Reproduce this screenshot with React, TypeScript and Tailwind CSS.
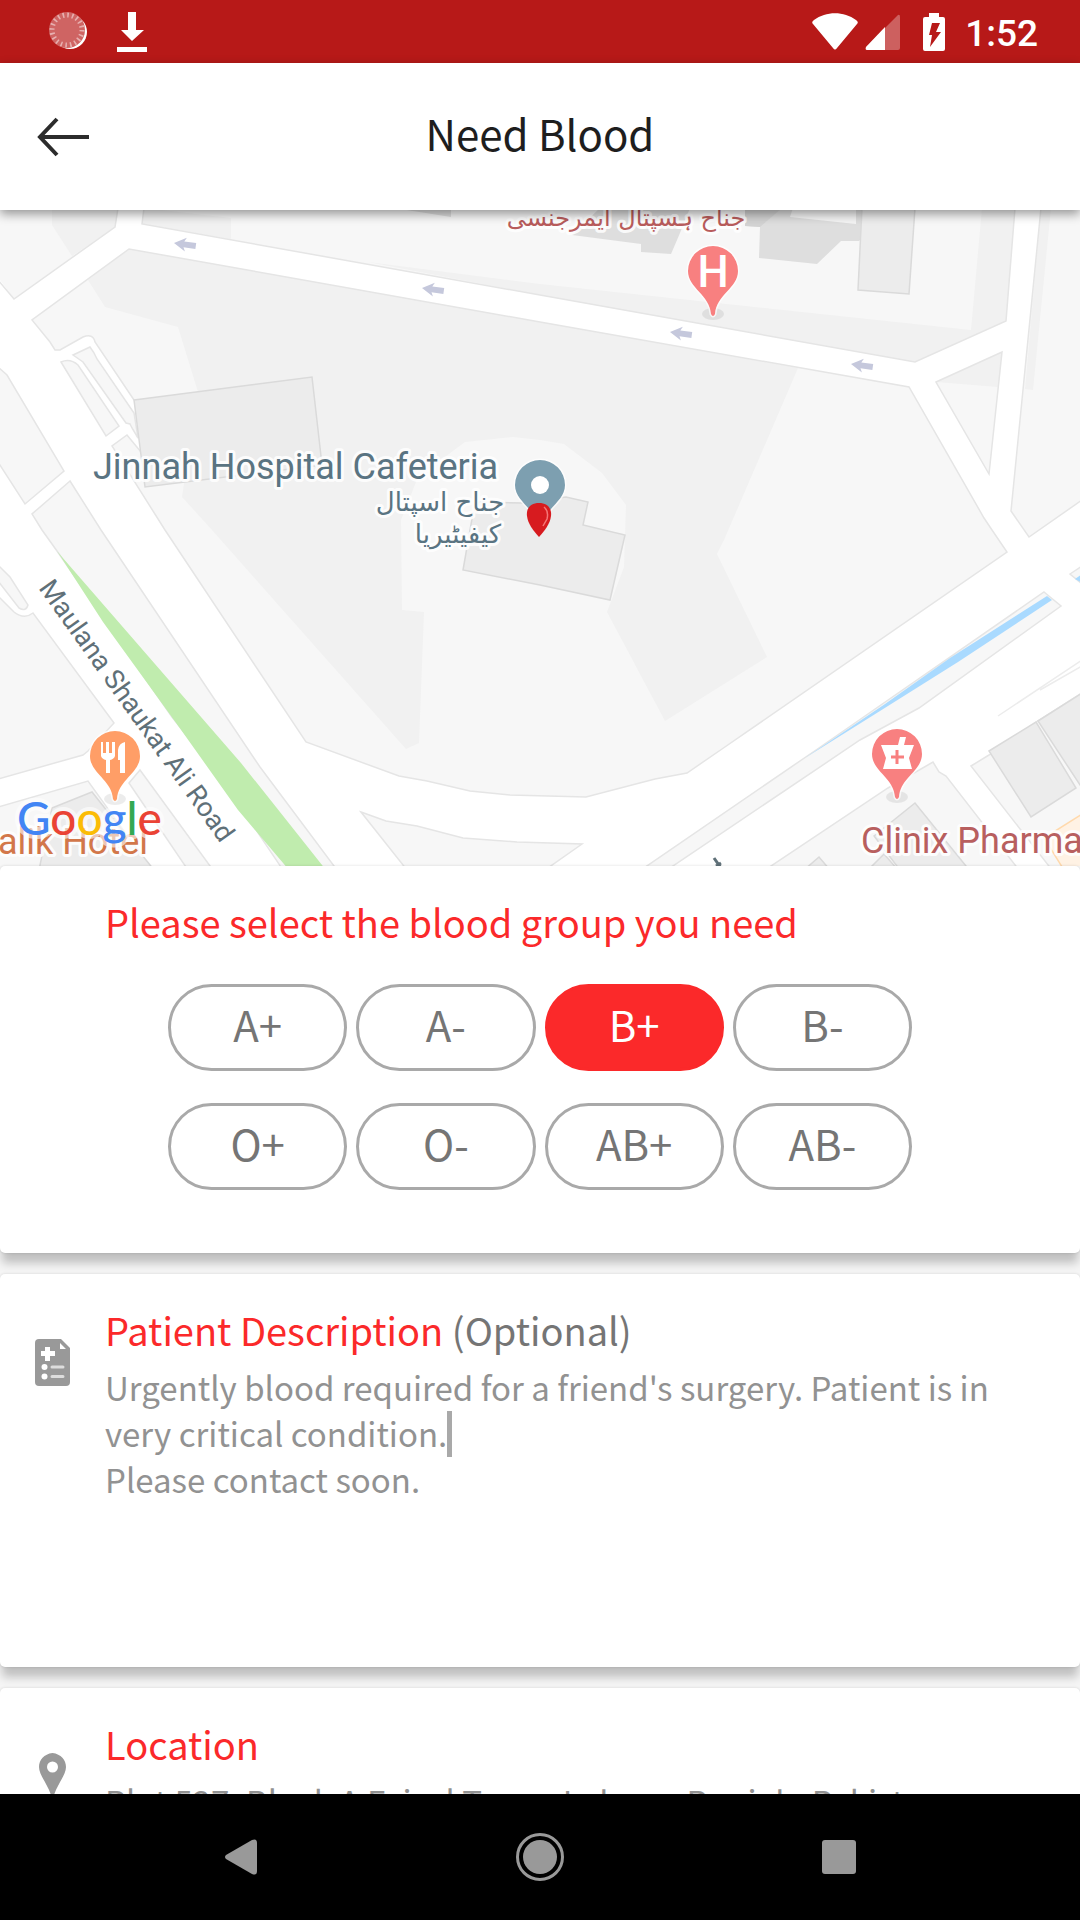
import { useState } from "react";

const bloodGroups = ["A+", "A-", "B+", "B-", "O+", "O-", "AB+", "AB-"];

function StatusBar() {
  return (
    <div className="flex h-[63px] shrink-0 items-center justify-between bg-[#b71918] pr-[42px] pl-[48px] text-white">
      <div className="flex items-center gap-[29px]">
        <svg width="40" height="40" viewBox="0 0 40 40" aria-hidden="true">
          <circle cx="22" cy="20" r="17" fill="#fff" />
          <circle cx="19" cy="18" r="18" fill="#cf6463" />
          <circle cx="19" cy="18" r="15" fill="none" stroke="#e7b0b0" strokeWidth="5" strokeDasharray="1.6 3.1" />
        </svg>
        <svg width="30" height="40" viewBox="0 0 30 40" fill="#fff" aria-hidden="true">
          <path d="M11 0h8v18h8L15 29 4 18h7zM0 35h30v5H0z" />
        </svg>
      </div>
      <div className="flex items-center">
        <svg width="46" height="38" viewBox="0 0 46 38" fill="#fff" aria-hidden="true">
          <path d="M1 11Q-1 9 2 7C14-2 32-2 44 7q3 2 1 4L25 35q-2 3-4 0z" />
        </svg>
        <svg className="ml-[7px]" width="36" height="38" viewBox="0 0 36 38" aria-hidden="true">
          <path d="M33 2q2-1 2 2v31q0 2-2 2H2q-2 0-1-3z" fill="#cd605f" />
          <path d="M20 14v23H2q-2 0-1-3z" fill="#fff" />
        </svg>
        <svg className="ml-[22px]" width="22" height="38" viewBox="0 0 22 38" aria-hidden="true">
          <path d="M6 0h10v4h4q2 0 2 2v30q0 2-2 2H2q-2 0-2-2V6q0-2 2-2h4z" fill="#fff" />
          <path d="M9 10h8l-4 9h5L7 34l2-12H6z" fill="#b71918" />
        </svg>
        <time className="ml-[20px] pt-[3px] font-[Roboto,sans-serif] text-[37px] leading-none font-medium">1:52</time>
      </div>
    </div>
  );
}

function Header() {
  return (
    <header className="relative z-10 grid h-[147px] shrink-0 grid-cols-[126px_1fr_126px] items-center bg-white shadow-[0_4px_10px_rgba(0,0,0,0.4)]">
      <button type="button" aria-label="Go back" className="flex h-full items-center pl-[37px]">
        <svg width="53" height="40" viewBox="0 0 53 40" fill="none" stroke="#2c2c2c" strokeWidth="4" aria-hidden="true">
          <path d="M2 20h50M20 2 3 20l17 18" />
        </svg>
      </button>
      <h1 className="pb-[7px] text-center text-[42px] leading-[56px] text-[#1e1e1e]">Need Blood</h1>
    </header>
  );
}

function PinShape({ x, y, fill, shadow = true }: { x: number; y: number; fill: string; shadow?: boolean }) {
  return (
    <g transform={`translate(${x} ${y})`}>
      {shadow && (
        <g fill="#000" opacity="0.07">
          <ellipse cx="0" cy="43" rx="11" ry="6" />
          <ellipse cx="0" cy="43" rx="7" ry="4" />
        </g>
      )}
      <path
        d="M0-25A25 25 0 0 1 25 0C25 17 3 24 2 43Q0 47-2 43C-3 24-25 17-25 0A25 25 0 0 1 0-25Z"
        fill={fill}
        stroke="#fff"
        strokeOpacity="0.7"
        strokeWidth="3"
        paintOrder="stroke"
      />
    </g>
  );
}

const directionArrows = [
  [174, 33],
  [422, 78],
  [670, 122],
  [851, 154],
];

function MapView() {
  return (
    <section aria-label="Map" className="h-[656px] shrink-0 overflow-hidden bg-white">
      <svg className="h-full w-full" viewBox="0 0 1080 656" preserveAspectRatio="xMidYMid slice">
        {/* land */}
        <g fill="#f7f7f7">
          <path d="M0-2H118L115 17 14 89 0 70Z" />
          <path d="M144-2 142 14 540 85 915 152 1006 111 1015-2Z" />
          <path d="M1041-2 1011 301 1029 327 1082 290V-2Z" />
          <path d="M936 172 1002 142 989 264Z" />
          <path d="M129 39 32 110 50 132 55 140H60L83 127Q93 123 95 132L134 190 141 242 127 225 112 236 165 320 306 532 399 566 427 571 470 581 510 585 586 587 655 569 687 563 722 539 1007 342 992 320 984 308 909 177 540 112Z" />
        </g>
        <g fill="#f1f1f1">
          <path d="M52-2H118L115 17 72 46 52 15Z" />
          <path d="M144-2 231 8V29L142 14Z" />
          <path d="M368 52 540 74 971 120 982-2H1015L1006 111 915 152 540 85Z" />
          <path d="M1041-2H1051L1033 180 1025 179Z" />
          <path d="M936 172 1002 142 998 177Z" />
          <path d="M129 39 88 70 105 97 178 117 198 182 182 287 212 320 406 539 419 533 424 402 402 400 401 310 418 267 465 232 513 227 540 230 564 234 602 263 626 295 624 357 607 402 665 511 767 447 717 344 724 330 798 158 540 112Z" />
        </g>
        <g fill="none" stroke="#e5e5e5" strokeWidth="1.5">
          <path d="M118-2 115 17 14 89-2 70M144-2 142 14 540 85 915 152 1006 111 1015-2M1041-2 1011 301 1029 327 1082 290M936 172 1002 142 989 264Z" />
          <path d="M134 190 95 132Q93 123 83 127L60 140H55L50 132 32 110 129 39 540 112 909 177 984 308 992 320 1007 342 722 539 687 563 655 569 586 587 510 585 470 581 427 571 399 566 306 532 165 320 112 236 127 225 141 242" />
        </g>
        <g fill="#f7f7f7" stroke="#e5e5e5" strokeWidth="1.5">
          <path d="M61 152Q70 148 78 155L119 216 106 226Z" />
          <path d="M73 145 90 137Q94 142 97 149L134 203 138 228 132 218 130 214 126 213 83 152Z" />
          <path d="M-2 157 7 165 64 261 25 294-2 252Z" />
          <path d="M70 271 32 304 42 320 57 341 172 507 227 577 283 660H337L260 557 101 320Z" />
          <path d="M-2 386 14 402Q24 410 33 403L114 513 88 541 83 545-2 569Z" />
          <path d="M-2 355 10 367 28 395Q26 402 19 398L-2 371Z" />
          <path d="M-2 597 88 571 152 660H-2Z" />
          <path d="M129 573 140 560 213 660H188Z" />
          <path d="M361 602 386 611 417 616 463 628 517 632 582 634 545 660H407Z" />
          <path d="M1044 382 1061 396 919 498 860 530 667 660H641L816 540Z" />
          <path d="M1070 364 1082 356V374Z" />
          <path d="M765 660 888 578 933 552 939 562 946 566 1019 660Z" />
          <path d="M971 556 989 545 1036 512 1082 483V660H1052Z" />
        </g>
        <path d="M998 506 1082 450M1040 480 1082 456" fill="none" stroke="#ececec" strokeWidth="1.5" />
        <path d="M57 341 62 347 241 553 326 660H289L238 600 179 517 103 412Z" fill="#c0ecae" />
        <path d="M1047 386 1052 390 958 452 880 501 805 548 885 494 950 448ZM1075 369 1082 364V373Z" fill="#a9daff" />

        {/* buildings */}
        <g fill="#dedede">
          <path d="M394-2H451V7Z" />
          <path d="M572 25 641 34V42L671 44 680 23 690-2H600Z" />
          <path d="M745-2V16L760 17 759 48 817 54 841 31H859L891-2Z" />
        </g>
        <path d="M760 17 782-2H745V16Z" fill="#d3d3d3" />
        <path d="M793-2 790 7 856 14V-2Z" fill="#f5f5f5" />
        <g fill="#ececec" stroke="#dadada" strokeWidth="1.5">
          <path d="M862-2 858 80 909 84 915-2Z" />
          <path d="M134 190 312 167 322 255 145 277Z" />
          <path d="M479 292 523 293 566 287 588 292 583 315 625 325 610 390 540 375 463 360 473 303Z" />
          <path d="M52 598 92 582 154 660H39Z" />
          <path d="M874 626 915 593 966 656 962 660H900Z" />
          <path d="M804 660 819 647 830 660ZM868 660 884 644 898 660Z" />
          <path d="M989 541 1036 512 1076 578 1031 607Z" />
          <path d="M1038 511 1082 483V578Z" />
        </g>
        <path d="M1082 604 1044 628 1064 660H1082Z" fill="#fff2e4" stroke="#ffd9ac" strokeWidth="1.5" />
        <path d="M714 648 721 658M716 656 721 653" stroke="#5f7078" strokeWidth="3" />

        <g fill="#c5c8dc">
          {directionArrows.map(([x, y]) => (
            <path key={x} transform={`translate(${x} ${y}) rotate(8)`} d="M0 0 12-7 10-3H22V3H10L12 7Z" />
          ))}
        </g>

        {/* places and roads */}
        <g fontFamily="Roboto, sans-serif" fontSize="36" stroke="#fff" strokeOpacity="0.85" strokeWidth="6" strokeLinejoin="round" paintOrder="stroke">
          <text x="93" y="269" fill="#5a7482">Jinnah Hospital Cafeteria</text>
          <text x="148" y="644" textAnchor="end" fill="#d2774a">Malik Hotel</text>
          <text x="861" y="643" fill="#b85f5f">Clinix Pharma</text>
          <text transform="translate(38 378) rotate(54.5)" fontSize="27" fill="#5f7078">Maulana Shaukat Ali Road</text>
        </g>
        <g fontFamily="'DejaVu Sans', sans-serif" fontSize="26" textAnchor="middle" stroke="#fff" strokeOpacity="0.85" strokeWidth="6" strokeLinejoin="round" paintOrder="stroke">
          <text x="440" y="301" fill="#5a7482">جناح اسپتال</text>
          <text x="458" y="333" fill="#5a7482">کیفیٹیریا</text>
          <text x="626" y="16" fontSize="24" fill="#b85c5c">جناح ہسپتال ایمرجنسی</text>
        </g>

        <PinShape x={713} y={61} fill="#f88080" />
        <text x="713" y="77" textAnchor="middle" fontFamily="Roboto, sans-serif" fontSize="44" fontWeight="500" fill="#fff">H</text>

        <PinShape x={540} y={275} fill="#7d9fb0" shadow={false} />
        <circle cx="540" cy="275" r="9" fill="#fff" />
        <path d="M539 293C547 293 552 298 551 306 550 314 545 320 539 327 533 320 528 314 527 306 526 298 531 293 539 293Z" fill="#d71b1f" />
        <path d="M544 297Q549 301 547 309L543 316" fill="none" stroke="#f47777" strokeWidth="1.5" />

        <PinShape x={115} y={546} fill="#ff9e67" />
        <g fill="#fff">
          <path d="M101 532h2v11h3v-11h3v11h3v-11h3v14q-1 3-5 4v13h-4v-13q-4-1-5-4z" />
          <path d="M125 532v31h-5v-13h-2v-10q1-7 7-8z" />
        </g>

        <PinShape x={897} y={544} fill="#f88080" />
        <path d="M881 535h17l2-8h6l-2 8h10l-5 13 3 11h-29l3-11z" fill="#fff" />
        <path d="M891 547h13M897 540v14" stroke="#f88080" strokeWidth="3" />

        <text x="17" y="625" fontFamily="Lato, sans-serif" fontSize="46" fontWeight="500" stroke="#fff" strokeOpacity="0.6" strokeWidth="8" strokeLinejoin="round" paintOrder="stroke">
          <tspan fill="#4285f4">G</tspan>
          <tspan fill="#ea4335">o</tspan>
          <tspan fill="#fbbc05">o</tspan>
          <tspan fill="#4285f4">g</tspan>
          <tspan fill="#34a853">l</tspan>
          <tspan fill="#ea4335">e</tspan>
        </text>
      </svg>
    </section>
  );
}

const cardClass =
  "relative shrink-0 rounded-[5px] bg-white shadow-[0_12px_10px_-2px_rgba(0,0,0,0.22),0_0_3px_rgba(0,0,0,0.14)]";
const labelClass = "block text-[38px] leading-[48px] text-[#fb292a]";

function BloodGroupCard() {
  const [selected, setSelected] = useState("B+");
  return (
    <section className={`${cardClass} pt-[32px] pb-[63px]`}>
      <h2 className={`${labelClass} pl-[105px]`}>Please select the blood group you need</h2>
      <div className="mx-auto mt-[38px] grid max-w-[744px] grid-cols-4 gap-x-[9px] gap-y-[32px]">
        {bloodGroups.map((group) => (
          <button
            key={group}
            type="button"
            aria-pressed={group === selected}
            onClick={() => setSelected(group)}
            className={`flex h-[87px] items-center justify-center rounded-full border-[3px] pb-[7px] text-[42px] leading-[56px] ${
              group === selected ? "border-[#fb292a] bg-[#fb292a] text-white" : "border-[#a9a9a9] bg-white text-[#757575]"
            }`}
          >
            {group}
          </button>
        ))}
      </div>
    </section>
  );
}

function DescriptionCard() {
  const [text, setText] = useState(
    "Urgently blood required for a friend's surgery. Patient is in very critical condition.\nPlease contact soon."
  );
  return (
    <section className={`${cardClass} grid grid-cols-[105px_1fr] pt-[32px] pr-[84px] pb-[27px]`}>
      <svg className="mt-[33px] ml-[35px]" width="35" height="47" viewBox="0 0 35 47" aria-hidden="true">
        <path d="M4 0H26L35 9V43Q35 47 31 47H4Q0 47 0 43V4Q0 0 4 0Z" fill="#999" />
        <path d="M25 4V10H31ZM10 8H15V12H20V17H15V22H10V17H6V12H10Z" fill="#fff" />
        <circle cx="9.500" cy="28" r="3" fill="#fff" />
        <circle cx="9.500" cy="37.500" r="3" fill="#fff" />
        <path d="M17 28H28M17 37.500H28" stroke="#ddd" strokeWidth="3" strokeLinecap="round" />
      </svg>
      <div>
        <label htmlFor="description" className={labelClass}>
          Patient Description <span className="text-[#757575]">(Optional)</span>
        </label>
        <div className="relative mt-[10px]">
          <textarea
            id="description"
            rows={6}
            value={text}
            onChange={(event) => setText(event.target.value)}
            className="block w-full resize-none overflow-hidden text-[33px] leading-[46px] text-[#929292] caret-[#a9a9a9] outline-none"
          />
          <span aria-hidden="true" className="absolute top-[47px] left-[342px] h-[46px] w-[5px] bg-[#a9a9a9]" />
        </div>
      </div>
    </section>
  );
}

function LocationCard() {
  return (
    <section className={`${cardClass} grid grid-cols-[105px_1fr] pt-[32px] pr-[84px] pb-[27px]`}>
      <svg className="mt-[33px] ml-[39px]" width="27" height="46" viewBox="0 0 27 46" aria-hidden="true">
        <path d="M13.500 0C22 1 27 7 27 14 27 22 19 30 15 42Q13.500 46 12 42C8 30 0 22 0 14 0 7 5 1 13.500 0Z" fill="#999" />
        <circle cx="13.500" cy="14" r="5.500" fill="#fff" />
      </svg>
      <div>
        <label htmlFor="location" className={labelClass}>Location</label>
        <input
          id="location"
          type="text"
          defaultValue="Plot 527, Block A Faisal Town, Lahore, Punjab, Pakistan"
          className="mt-[10px] block w-full text-[33px] leading-[46px] text-[#929292] outline-none"
        />
      </div>
    </section>
  );
}

function NavigationBar() {
  return (
    <nav aria-label="System navigation" className="relative z-10 h-[126px] shrink-0 bg-black">
      <div className="mx-auto grid h-full max-w-[897px] grid-cols-3 justify-items-center">
        <button type="button" aria-label="Back" className="px-8">
          <svg width="32" height="36" viewBox="0 0 32 36" fill="#999" aria-hidden="true">
            <path d="M1 16 27 1Q32-1 32 4V32Q32 37 27 35L1 20Q-1 18 1 16Z" />
          </svg>
        </button>
        <button type="button" aria-label="Home" className="px-8">
          <svg width="48" height="48" viewBox="0 0 48 48" aria-hidden="true">
            <circle cx="24" cy="24" r="22.500" fill="none" stroke="#999" strokeWidth="3" />
            <circle cx="24" cy="24" r="17" fill="#999" />
          </svg>
        </button>
        <button type="button" aria-label="Recent apps" className="px-8">
          <svg width="34" height="34" viewBox="0 0 34 34" aria-hidden="true">
            <rect width="34" height="34" rx="3" fill="#999" />
          </svg>
        </button>
      </div>
    </nav>
  );
}

export default function App() {
  return (
    <div className="flex h-screen flex-col overflow-hidden bg-[#f5f5f5] font-['Noto_Sans_CJK_SC',sans-serif]">
      <StatusBar />
      <Header />
      <main className="flex min-h-0 flex-1 flex-col overflow-hidden">
        <MapView />
        <div className="flex flex-col gap-[21px]">
          <BloodGroupCard />
          <DescriptionCard />
          <LocationCard />
        </div>
      </main>
      <NavigationBar />
    </div>
  );
}
